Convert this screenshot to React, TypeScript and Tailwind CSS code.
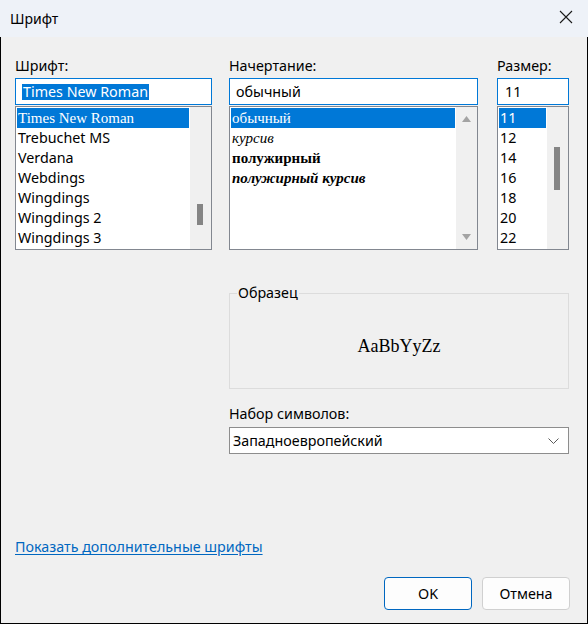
import { FC, ReactNode } from 'react';

const fonts = ['Times New Roman', 'Trebuchet MS', 'Verdana', 'Webdings', 'Wingdings', 'Wingdings 2', 'Wingdings 3'];
const sizes = ['11', '12', '14', '16', '18', '20', '22'];

interface scrollProps {
    thumbTop?: number;
    thumbHeight?: number;
    arrows?: boolean;
}

const ScrollBar: FC<scrollProps> = ({ thumbTop, thumbHeight, arrows }) => {
    return (
        <div className="w-[21px] h-full bg-[#f0f0f0] relative">
            {thumbTop !== undefined && (
                <div
                    className="absolute left-[7px] w-[6px] bg-[#858585]"
                    style={{ top: thumbTop, height: thumbHeight }}
                />
            )}
            {arrows && (
                <>
                    <svg className="absolute left-[6px] top-[9px]" width="9" height="6" viewBox="0 0 9 6">
                        <path d="M0 6 L4.5 0 L9 6 Z" fill="#a3a3a3" />
                    </svg>
                    <svg className="absolute left-[6px] bottom-[9px]" width="9" height="6" viewBox="0 0 9 6">
                        <path d="M0 0 L4.5 6 L9 0 Z" fill="#a3a3a3" />
                    </svg>
                </>
            )}
        </div>
    );
};

const ListBox: FC<{ children: ReactNode; scroll: ReactNode }> = ({ children, scroll }) => {
    return (
        <div className="mt-px h-[144px] border border-[#828790] bg-white flex">
            <div className="flex-1 p-px flex flex-col">{children}</div>
            {scroll}
        </div>
    );
};

const Row: FC<{ selected?: boolean; className?: string; children: ReactNode }> = ({ selected, className, children }) => {
    return (
        <div
            className={
                'h-[20px] shrink-0 pl-[1px] pt-px leading-[18px] whitespace-nowrap ' +
                (selected ? 'bg-[#0078d7] text-white ' : 'text-black ') +
                (className ?? '')
            }
        >
            {children}
        </div>
    );
};

const Field: FC<{ children: ReactNode; className?: string }> = ({ children, className }) => {
    return (
        <div className={'h-[27px] border border-[#0078d7] bg-white flex items-center ' + (className ?? '')}>
            {children}
        </div>
    );
};

const App: FC = () => {
    return (
        <div className="w-[588px] h-[624px] flex flex-col font-['Noto_Sans',sans-serif] text-[14.3px] text-black">
            {/* title bar */}
            <div className="h-[37px] bg-[#eef2f8] flex items-center justify-between pl-[10px] pr-[15px]">
                <span className="text-[14px] leading-[20px]">Шрифт</span>
                <svg width="14" height="14" viewBox="0 0 14 14" className="mb-[3px]">
                    <path d="M1 1 L13 13 M13 1 L1 13" stroke="#1a1a1a" strokeWidth="1.1" />
                </svg>
            </div>

            <div className="flex-1 bg-[#f0f0f0] border-x border-b border-black pl-[14px] pt-[19px] flex flex-col">
                <div className="flex">
                    {/* font */}
                    <div className="w-[197px] flex flex-col">
                        <div className="h-[22px] leading-[20px]">Шрифт:</div>
                        <Field className="pl-[6px]">
                            <span className="bg-[#0078d7] text-white leading-[16px] px-px">Times New Roman</span>
                        </Field>
                        <ListBox scroll={<ScrollBar thumbTop={97} thumbHeight={21} />}>
                            {fonts.map((f, i) => (
                                <Row
                                    key={f}
                                    selected={i === 0}
                                    className={i === 0 ? "font-['Liberation_Serif',serif] text-[15px]" : ''}
                                >
                                    {f}
                                </Row>
                            ))}
                        </ListBox>
                    </div>

                    {/* style */}
                    <div className="w-[249px] ml-[17px] flex flex-col">
                        <div className="h-[22px] leading-[20px]">Начертание:</div>
                        <Field className="pl-[6px]">обычный</Field>
                        <ListBox scroll={<ScrollBar arrows />}>
                            <div className="font-['Liberation_Serif',serif] text-[15px] flex flex-col">
                                <Row selected>обычный</Row>
                                <Row className="italic">курсив</Row>
                                <Row className="font-bold">полужирный</Row>
                                <Row className="font-bold italic">полужирный курсив</Row>
                            </div>
                        </ListBox>
                    </div>

                    {/* size */}
                    <div className="w-[72px] ml-[19px] flex flex-col">
                        <div className="h-[22px] leading-[20px]">Размер:</div>
                        <Field className="pl-[7px]">11</Field>
                        <ListBox scroll={<ScrollBar thumbTop={40} thumbHeight={43} />}>
                            {sizes.map((s, i) => (
                                <Row key={s} selected={i === 0}>
                                    {s}
                                </Row>
                            ))}
                        </ListBox>
                    </div>
                </div>

                {/* sample */}
                <fieldset className="ml-[214px] w-[340px] h-[106px] mt-[33px] border border-[#dcdcdc] px-[7px]">
                    <legend className="px-px leading-[20px]">Образец</legend>
                    <div className="h-[76px] flex items-center justify-center pt-[11px]">
                        <span className="font-['Liberation_Serif',serif] text-[18px]">AaBbYyZz</span>
                    </div>
                </fieldset>

                <div className="ml-[214px] w-[340px] mt-[15px] flex flex-col">
                    <div className="h-[20px] leading-[20px]">Набор символов:</div>
                    <div className="mt-[3px] h-[27px] border border-[#8d8d8d] bg-white flex items-center justify-between pl-[3px] pr-[9px]">
                        <span>Западноевропейский</span>
                        <svg width="11" height="6" viewBox="0 0 11 6">
                            <path d="M0.5 0.5 L5.5 5.5 L10.5 0.5" fill="none" stroke="#5a5a5a" strokeWidth="1" />
                        </svg>
                    </div>
                </div>

                <div className="mt-[83px] h-[20px] leading-[20px]">
                    <a className="text-[#0067c0] underline underline-offset-2 cursor-pointer">
                        Показать дополнительные шрифты
                    </a>
                </div>

                <div className="mt-[20px] flex justify-end gap-[10px] pr-[17px]">
                    <button className="w-[88px] h-[33px] rounded-[4px] border border-[#0067c0] bg-[#fdfdfd]">
                        OK
                    </button>
                    <button className="w-[88px] h-[33px] rounded-[4px] border border-[#d0d0d0] bg-[#fdfdfd]">
                        Отмена
                    </button>
                </div>
            </div>
        </div>
    );
};

export default App;
